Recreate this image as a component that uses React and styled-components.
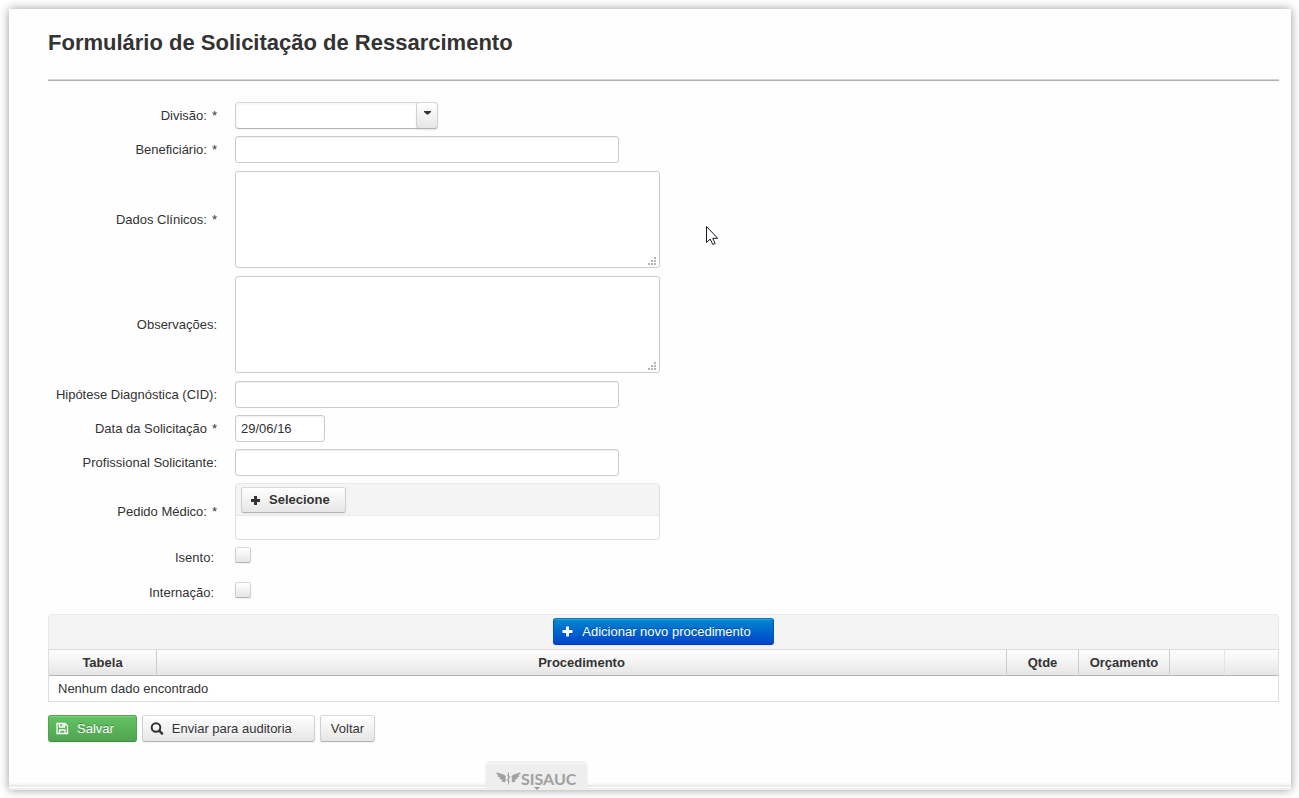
import React from "react";
import styled, { createGlobalStyle, css } from "styled-components";

const GlobalStyle = createGlobalStyle`
  *, *::before, *::after { box-sizing: border-box; }
  body {
    margin: 0;
    background: #fff;
    color: #333;
    font: 13px/20px "Liberation Sans", Arial, sans-serif;
  }
  button, input, select, textarea { font: inherit; color: inherit; margin: 0; }
`;

const raised = css`
  background: linear-gradient(#fff, #e6e6e6);
  border: 1px solid;
  border-color: #d9d9d9 #d0d0d0 #b3b3b3;
  box-shadow: inset 0 1px 0 rgba(255, 255, 255, 0.2), 0 1px 2px rgba(0, 0, 0, 0.06);
`;

const Page = styled.div`
  display: flex;
  min-height: 100vh;
  padding: 9px 8px 8px 9px;
`;

const Panel = styled.main`
  flex: 1;
  display: flex;
  flex-direction: column;
  background: #fefefe;
  box-shadow: 0 0 9px rgba(0, 0, 0, 0.4);
`;

const Content = styled.form`
  flex: 1;
  padding: 19px 12px 18px 39px;
`;

const Title = styled.h1`
  margin: 0;
  font-size: 22px;
  line-height: 30px;
`;

const Rule = styled.hr`
  height: 2px;
  margin: 21px 0;
  border: 0;
  border-top: 1px solid #d4d4d4;
  border-bottom: 1px solid #b0b0b0;
`;

const Fields = styled.div`
  display: flex;
  flex-direction: column;
  gap: ${(p) => p.$gap || 7}px;
  margin: ${(p) => p.$inset || 0}px 0;
`;

const Row = styled.div`
  display: grid;
  grid-template-columns: 169px 1fr;
  column-gap: 18px;
  align-items: ${(p) => (p.$check ? "start" : "center")};
  min-height: ${(p) => (p.$check ? 28 : 27)}px;
`;

const Label = styled.label`
  display: flex;
  justify-content: flex-end;
  gap: 5px;
  padding: ${(p) => (p.$check ? "1px 3px 0 0" : 0)};
`;

const TextInput = styled.input`
  display: block;
  width: ${(p) => p.$width || 384}px;
  height: 27px;
  padding: 0 5px;
  background: #fff;
  border: 1px solid #ccc;
  border-radius: 3px;
  box-shadow: inset 0 1px 1px rgba(0, 0, 0, 0.06);
`;

const AreaWrap = styled.div`
  position: relative;
  width: 425px;
`;

const TextArea = styled.textarea`
  display: block;
  width: 100%;
  height: 97px;
  padding: 4px 5px;
  resize: none;
  background: #fff;
  border: 1px solid #ccc;
  border-radius: 3px;
`;

const Grip = styled.svg`
  position: absolute;
  right: 4px;
  bottom: 3px;
  fill: #b4b4b4;
`;

const SelectWrap = styled.div`
  position: relative;
  width: 203px;
  height: 27px;
`;

const Select = styled.select`
  appearance: none;
  width: 100%;
  height: 27px;
  padding: 0 28px 0 5px;
  background: #fff;
  border: 1px solid;
  border-color: #d9d9d9 #d0d0d0 #b3b3b3;
  border-radius: 4px;
  box-shadow: inset 0 2px 2px rgba(0, 0, 0, 0.04), 0 1px 2px rgba(0, 0, 0, 0.06);
`;

const SelectTrigger = styled.span`
  ${raised}
  position: absolute;
  top: 0;
  right: 0;
  width: 22px;
  height: 27px;
  display: flex;
  justify-content: center;
  padding-top: 7px;
  border-radius: 4px;
  pointer-events: none;
`;

const Upload = styled.div`
  width: 425px;
  border: 1px solid #ddd;
  border-top-color: #e9e9e9;
  border-radius: 4px;
  overflow: hidden;
`;

const UploadBar = styled.div`
  height: 32px;
  padding: 3px 5px;
  background: #f4f4f4;
  border-bottom: 1px solid #e9e9e9;
`;

const UploadFiles = styled.div`
  height: 23px;
`;

const Button = styled.button`
  ${raised}
  display: inline-flex;
  align-items: center;
  height: 27px;
  padding: 0 10px;
  border-radius: 3px;
  white-space: nowrap;
  text-shadow: 0 1px 1px rgba(255, 255, 255, 0.75);
  ${(p) =>
    p.$icon &&
    css`
      gap: 8px;
      padding: 0 22px 0 7px;
    `}
  ${(p) =>
    p.$tone === "green" &&
    css`
      color: #fff;
      background: linear-gradient(#62c462, #51a351);
      border-color: #51a351 #51a351 #3f8a3f;
      text-shadow: 0 -1px 0 rgba(0, 0, 0, 0.25);
    `}
  ${(p) =>
    p.$tone === "blue" &&
    css`
      color: #fff;
      background: linear-gradient(#0088cc, #0044cc);
      border-color: #0074b4 #0055bb #003da6;
      text-shadow: 0 -1px 0 rgba(0, 0, 0, 0.25);
    `}
`;

const PickButton = styled(Button)`
  height: 26px;
  gap: 7px;
  padding: 0 15px 0 8px;
  font-weight: bold;
`;

const Check = styled.input`
  ${raised}
  appearance: none;
  display: block;
  width: 16px;
  height: 16px;
  border-radius: 2px;
`;

const GridBar = styled.div`
  display: flex;
  justify-content: center;
  height: 35px;
  margin-top: 4px;
  padding-top: 3px;
  background: #f4f4f4;
  border: 1px solid #e9e9e9;
  border-bottom: 0;
  border-radius: 4px 4px 0 0;
`;

const Table = styled.table`
  width: 100%;
  table-layout: fixed;
  border-collapse: separate;
  border-spacing: 0;
  border: 1px solid #ddd;
`;

const Th = styled.th`
  width: ${(p) => (p.$width ? p.$width + "px" : "auto")};
  height: 26px;
  padding: 0;
  background: linear-gradient(#fff, #e6e6e6);
  border-bottom: 1px solid #b3b3b3;
  border-right: ${(p) => (p.$line ? `1px solid ${p.$line}` : 0)};
`;

const Td = styled.td`
  height: 25px;
  padding: 0 9px;
  background: #fff;
`;

const Actions = styled.div`
  display: flex;
  gap: 5px;
  margin-top: 13px;
`;

const Footer = styled.footer`
  height: 27px;
  padding-left: 477px;
  background: linear-gradient(#fefefe 19px, #f4f4f4 22px, #dedede 23px, #fff 24px, #fff 25px, #eee 25px);
`;

const Brand = styled.a`
  position: relative;
  display: flex;
  align-items: center;
  width: 101px;
  height: 27px;
  padding: 4px 0 0 10px;
  background: #eee;
  border-radius: 4px 4px 0 0;
  box-shadow: 0 -1px 2px rgba(0, 0, 0, 0.12), inset 0 1px 0 #fafafa;
  color: #a0a0a0;
  font: bold 16px/20px Lato, sans-serif;
  text-decoration: none;
`;

const BrandArrow = styled.svg`
  position: absolute;
  left: 48px;
  bottom: 0;
  fill: #999;
`;

const Pointer = styled.svg`
  position: absolute;
  left: 706px;
  top: 226px;
  pointer-events: none;
`;

const CaretIcon = () => (
  <svg width="8" height="5" viewBox="0 0 8 5" fill="#333" aria-hidden="true">
    <path d="M1 1h7v1L5.200 4.500H3.800L1 2z" />
  </svg>
);

const PlusIcon = () => (
  <svg width="13" height="14" viewBox="0 0 13 14" fill="currentColor" aria-hidden="true">
    <path d="M5 1.500h3v3.500H11.500v3H8v3.500H5V8H1.500V5H5z" />
  </svg>
);

const SmallPlusIcon = () => (
  <svg width="12" height="14" viewBox="0 0 12 14" fill="currentColor" aria-hidden="true">
    <path d="M4 3h3v3h3v3H7v3H4V9H1V6h3z" />
  </svg>
);

const SaveIcon = () => (
  <svg width="13" height="13" viewBox="0 0 13 13" fill="none" stroke="currentColor" strokeWidth="1.300" aria-hidden="true">
    <path d="M1 1.500h8l2.500 2.500v7.500H1z" />
    <path d="M3.500 11.500V8h5.500v3.500M3.500 1.500V5h5V1.500" />
    <path d="M7 2v2.500" strokeWidth="1.500" />
  </svg>
);

const SearchIcon = () => (
  <svg width="14" height="13" viewBox="0 0 14 13" fill="none" stroke="currentColor" strokeWidth="2" aria-hidden="true">
    <circle cx="6" cy="5.500" r="4.300" />
    <path d="M9.200 8.700l2.900 2.900" strokeWidth="2.400" strokeLinecap="round" />
  </svg>
);

const WingsIcon = () => (
  <svg width="25" height="15" viewBox="0 0 25 15" fill="none" stroke="#a0a0a0" aria-hidden="true">
    <path d="M.8 2c2.500 2 5.200.6 8.700 4M2 4.600c2 1.500 4.500.7 7.500 3M3.800 7c2 1.200 4 .5 5.700 2.200M6 9.400c1.500.8 2.500.3 3.500 1.200" strokeWidth="1.900" />
    <path d="M24.200 2c-2.500 2-5 .6-8.200 4M23 4.600c-2 1.500-4.200.7-7 3M21.200 7c-2 1.200-3.500.5-5.200 2.200M19 9.400c-1.200.8-2 .3-3 1.200" strokeWidth="1.900" />
    <path d="M12.500 1.500v12" />
    <path d="M11 4c1 1.200 3.500 1 3 2.500s-3 1-2.800 2.300 2.300.9 2.300 2.200" />
  </svg>
);

const ResizeGrip = () => (
  <Grip width="8" height="8" viewBox="0 0 8 8" aria-hidden="true">
    <path d="M6 0h2v2H6zM3 3h2v2H3zM6 3h2v2H6zM0 6h2v2H0zM3 6h2v2H3zM6 6h2v2H6z" />
  </Grip>
);

function FieldLabel({ id, text, required, check }) {
  return (
    <Label htmlFor={id} $check={check}>
      <span>{text}</span>
      {required && <span>*</span>}
    </Label>
  );
}

function TextRow({ id, label, required, width, value }) {
  return (
    <Row>
      <FieldLabel id={id} text={label} required={required} />
      <TextInput id={id} type="text" $width={width} defaultValue={value} />
    </Row>
  );
}

function AreaRow({ id, label, required }) {
  return (
    <Row>
      <FieldLabel id={id} text={label} required={required} />
      <AreaWrap>
        <TextArea id={id} />
        <ResizeGrip />
      </AreaWrap>
    </Row>
  );
}

function CheckRow({ id, label }) {
  return (
    <Row $check>
      <FieldLabel id={id} text={label} check />
      <Check id={id} type="checkbox" />
    </Row>
  );
}

export default function App() {
  return (
    <Page>
      <GlobalStyle />
      <Panel>
        <Content onSubmit={(e) => e.preventDefault()}>
          <Title>Formulário de Solicitação de Ressarcimento</Title>
          <Rule />
          <Fields>
            <Row>
              <FieldLabel id="divisao" text="Divisão:" required />
              <SelectWrap>
                <Select id="divisao" defaultValue="">
                  <option value="" />
                </Select>
                <SelectTrigger>
                  <CaretIcon />
                </SelectTrigger>
              </SelectWrap>
            </Row>
            <TextRow id="beneficiario" label="Beneficiário:" required />
            <Fields $gap={8} $inset={1}>
              <AreaRow id="dados" label="Dados Clínicos:" required />
              <AreaRow id="observacoes" label="Observações:" />
            </Fields>
            <TextRow id="cid" label="Hipótese Diagnóstica (CID):" />
            <TextRow id="data" label="Data da Solicitação" required width={90} value="29/06/16" />
            <TextRow id="profissional" label="Profissional Solicitante:" />
            <Row>
              <FieldLabel id="pedido" text="Pedido Médico:" required />
              <Upload>
                <UploadBar>
                  <PickButton id="pedido" type="button">
                    <SmallPlusIcon />
                    Selecione
                  </PickButton>
                </UploadBar>
                <UploadFiles />
              </Upload>
            </Row>
            <CheckRow id="isento" label="Isento:" />
            <CheckRow id="internacao" label="Internação:" />
          </Fields>

          <GridBar>
            <Button type="button" $icon $tone="blue">
              <PlusIcon />
              Adicionar novo procedimento
            </Button>
          </GridBar>
          <Table>
            <thead>
              <tr>
                <Th $width={108} $line="#ccc">Tabela</Th>
                <Th $line="#ccc">Procedimento</Th>
                <Th $width={72} $line="#ccc">Qtde</Th>
                <Th $width={91} $line="#ccc">Orçamento</Th>
                <Th $width={55} $line="#e4e4e4" />
                <Th $width={53} />
              </tr>
            </thead>
            <tbody>
              <tr>
                <Td colSpan={6}>Nenhum dado encontrado</Td>
              </tr>
            </tbody>
          </Table>

          <Actions>
            <Button type="submit" $icon $tone="green">
              <SaveIcon />
              Salvar
            </Button>
            <Button type="button" $icon>
              <SearchIcon />
              Enviar para auditoria
            </Button>
            <Button type="button">Voltar</Button>
          </Actions>
        </Content>
        <Footer>
          <Brand href="#">
            <WingsIcon />
            SISAUC
            <BrandArrow width="6" height="3" viewBox="0 0 6 3" aria-hidden="true">
              <path d="M0 0h6L3 3z" />
            </BrandArrow>
          </Brand>
        </Footer>
      </Panel>
      <Pointer width="13" height="20" viewBox="0 0 13 20" aria-hidden="true">
        <path
          d="M.5.500v16l3.700-3.400 2.600 5.400 2.400-1.100-2.500-5.100h5z"
          fill="#fff"
          stroke="#1a1a26"
        />
      </Pointer>
    </Page>
  );
}
